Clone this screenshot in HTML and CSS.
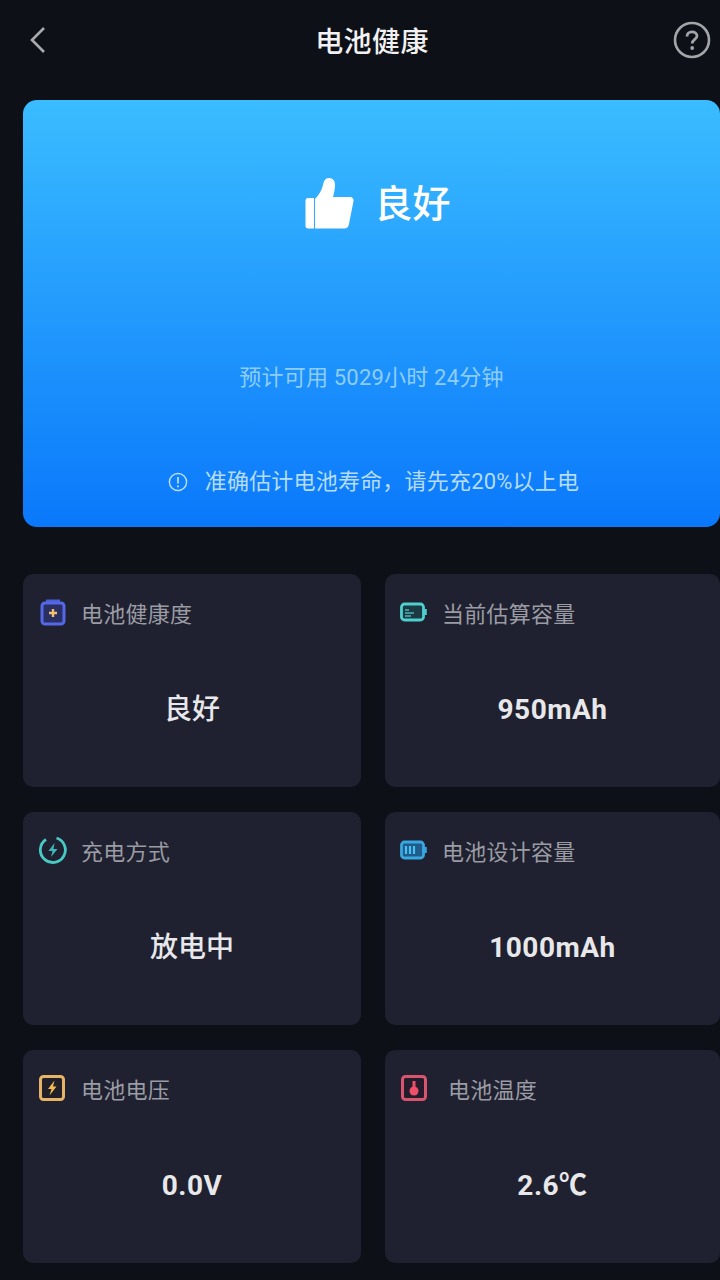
FILE: index.html
```html
<!DOCTYPE html>
<html lang="zh-CN">
<head>
    <meta charset="UTF-8">
    <meta name="viewport" content="width=device-width, initial-scale=1.0">
    <title>电池健康</title>
    <link rel="stylesheet" href="styles.css">
</head>
<body>
    <div class="page">

        <header class="topbar">
            <svg class="back-icon" width="18" height="28" viewBox="0 0 18 28"><path d="M15 2 L3 14 L15 26" fill="none" stroke="#a9abb0" stroke-width="2.6"/></svg>
            <h1>电池健康</h1>
            <svg class="help-icon" width="38" height="38" viewBox="0 0 38 38">
                <circle cx="19" cy="19" r="17" fill="none" stroke="#a4a5a9" stroke-width="2.6"/>
                <path d="M14 15.5 C14 12.5 16.2 10.8 19 10.8 C21.8 10.8 24 12.5 24 15 C24 18.5 19.2 18.5 19.2 22.5" fill="none" stroke="#a4a5a9" stroke-width="2.8"/>
                <circle cx="19.2" cy="27" r="1.9" fill="#a4a5a9"/>
            </svg>
        </header>

        <section class="hero">
            <div class="hero-status">
                <svg width="50" height="54" viewBox="0 0 50 54">
                    <path d="M1.500 24 C1.500 22 2.500 21 4 21 H10 V51.500 H4 C2.500 51.500 1.500 50.500 1.500 49 Z" fill="#fff"/>
                    <path d="M11 22 C15 18 18 13 19.500 6 C20 3 22 1 25 1 C29 1 31 4 31 8 C31 12 30 16 29 20 H46 C48.500 20 50 22 49.500 24 L45 47 C44.500 50 43 51.500 40 51.500 H11 Z" fill="#fff"/>
                </svg>
                <span class="hero-label">良好</span>
            </div>
            <p class="hero-time">预计可用 5029小时 24分钟</p>
            <p class="hero-tip">
                <svg width="20" height="20" viewBox="0 0 20 20">
                    <circle cx="10" cy="10" r="8.6" fill="none" stroke="#b5dcfa" stroke-width="1.5"/>
                    <path d="M10 5 V11.500" stroke="#b5dcfa" stroke-width="1.8"/>
                    <circle cx="10" cy="14.300" r="1.100" fill="#b5dcfa"/>
                </svg>
                <span>准确估计电池寿命，请先充20%以上电</span>
            </p>
        </section>

        <section class="cards">
            <div class="card">
                <div class="card-head head-loose">
                    <svg class="icon-inset" width="26" height="28" viewBox="0 0 26 28">
                        <path d="M6 1.500 H20 V5 H6 Z" fill="#4d5fd6"/>
                        <rect x="2" y="5" width="22" height="21" rx="3" fill="#2a2f63" stroke="#5468e8" stroke-width="3"/>
                        <path d="M13 11 V19 M9 15 H17" stroke="#f2c26b" stroke-width="2.400"/>
                    </svg>
                    <span class="card-title">电池健康度</span>
                </div>
                <div class="card-value normal">良好</div>
            </div>

            <div class="card">
                <div class="card-head">
                    <svg width="28" height="20" viewBox="0 0 28 20">
                        <rect x="1.500" y="2" width="22" height="16" rx="3" fill="#1b3a44" stroke="#4fd0cf" stroke-width="2.800"/>
                        <path d="M25.500 7 V13" stroke="#4fd0cf" stroke-width="2.500"/>
                        <path d="M5 8 H9 M5 11 H14 M5 14 H11" stroke="#4fb3b5" stroke-width="1.500"/>
                    </svg>
                    <span class="card-title">当前估算容量</span>
                </div>
                <div class="card-value">950mAh</div>
            </div>

            <div class="card">
                <div class="card-head head-tight">
                    <svg width="30" height="30" viewBox="0 0 30 30">
                        <path d="M18.500 3 A12.500 12.500 0 1 1 8 4.500" fill="none" stroke="#49c9c4" stroke-width="2.800"/>
                        <path d="M16.500 8 L10.500 16 H14.500 L13 22 L19.500 14 H15.500 Z" fill="#3fb7ba"/>
                    </svg>
                    <span class="card-title">充电方式</span>
                </div>
                <div class="card-value normal">放电中</div>
            </div>

            <div class="card">
                <div class="card-head">
                    <svg width="28" height="20" viewBox="0 0 28 20">
                        <rect x="1.500" y="2" width="22" height="16" rx="3" fill="#1f5c8c" stroke="#38a8e0" stroke-width="2.800"/>
                        <path d="M25.500 7 V13" stroke="#38a8e0" stroke-width="2.500"/>
                        <path d="M6 6 V14 M10 6 V14 M14 6 V14" stroke="#4cc0f0" stroke-width="2.200"/>
                    </svg>
                    <span class="card-title">电池设计容量</span>
                </div>
                <div class="card-value">1000mAh</div>
            </div>

            <div class="card">
                <div class="card-head head-loose">
                    <svg width="28" height="28" viewBox="0 0 28 28">
                        <rect x="2.500" y="2.500" width="23" height="23" rx="3" fill="#211f28" stroke="#e5b567" stroke-width="3"/>
                        <path d="M16.500 6.500 L10 15 H13.500 L11.500 21.500 L18.500 12.500 H15 Z" fill="#efbe55"/>
                    </svg>
                    <span class="card-title">电池电压</span>
                </div>
                <div class="card-value">0.0V</div>
            </div>

            <div class="card">
                <div class="card-head">
                    <svg width="28" height="28" viewBox="0 0 28 28">
                        <rect x="2.500" y="2.500" width="23" height="23" rx="3" fill="#241c2a" stroke="#d9556f" stroke-width="3"/>
                        <path d="M14 7 V15" stroke="#e9506c" stroke-width="3"/>
                        <circle cx="14" cy="17" r="4.500" fill="#f04f6c"/>
                    </svg>
                    <span class="card-title gap-wide">电池温度</span>
                </div>
                <div class="card-value">2.6℃</div>
            </div>
        </section>

    </div>
</body>
</html>
```

FILE: styles.css
```css
html, body {
    margin: 0;
    height: 100%;
}

body {
    background-color: #0e1017;
    font-family: Roboto, "Noto Sans CJK SC", sans-serif;
    overflow: hidden;
}

.page {
    height: 1280px;
    box-sizing: border-box;
    padding-left: 23px;
    overflow: hidden;
}

/* Top bar */
.topbar {
    height: 100px;
    margin-left: -23px;
    padding: 0 9px 21px 29px;
    box-sizing: border-box;
    display: flex;
    align-items: center;
    justify-content: space-between;
}

.topbar h1 {
    margin: 0 0 0 24px;
    font-size: 28px;
    letter-spacing: 0.4px;
    font-weight: 500;
    color: #f1f1f3;
}

/* Blue panel */
.hero {
    height: 427px;
    box-sizing: border-box;
    padding-top: 77px;
    border-radius: 14px;
    background: linear-gradient(180deg, #3abcff 0%, #0a78fb 100%);
    display: flex;
    flex-direction: column;
    align-items: center;
}

.hero-status {
    display: flex;
    align-items: center;
    gap: 20px;
    height: 54px;
    margin-left: 12px;
}

.hero-label {
    font-size: 38px;
    font-weight: 500;
    color: #fff;
    margin-bottom: 7px;
}

.hero-time {
    margin: 131px 0 0;
    font-size: 22px;
    letter-spacing: 0.2px;
    line-height: 32px;
    color: #8fcdf8;
}

.hero-tip {
    margin: 72px 0 0 4px;
    display: flex;
    align-items: center;
    gap: 17px;
    font-size: 22px;
    letter-spacing: 0.2px;
    line-height: 32px;
    color: #b5dcfa;
}

/* Stat cards */
.cards {
    margin-top: 47px;
    display: grid;
    grid-template-columns: 338px 335px;
    grid-auto-rows: 213px;
    column-gap: 24px;
    row-gap: 25px;
}

.card {
    background-color: #1f2130;
    border-radius: 10px;
}

.card-head {
    height: 28px;
    margin-top: 24px;
    padding-left: 15px;
    display: flex;
    align-items: center;
    gap: 14px;
}

.head-loose {
    gap: 15px;
}

.head-tight {
    gap: 13px;
}

.icon-inset {
    margin-left: 2px;
}

.card-title {
    font-size: 22px;
    letter-spacing: 0.25px;
    color: #9b9ca3;
}

.gap-wide {
    margin-left: 6px;
}

.card-value {
    margin-top: 64px;
    text-align: center;
    font-size: 28px;
    letter-spacing: 0.5px;
    line-height: 40px;
    font-weight: 700;
    color: #e8e8ea;
}

.card-value.normal {
    font-weight: 500;
    letter-spacing: 0;
}
```
